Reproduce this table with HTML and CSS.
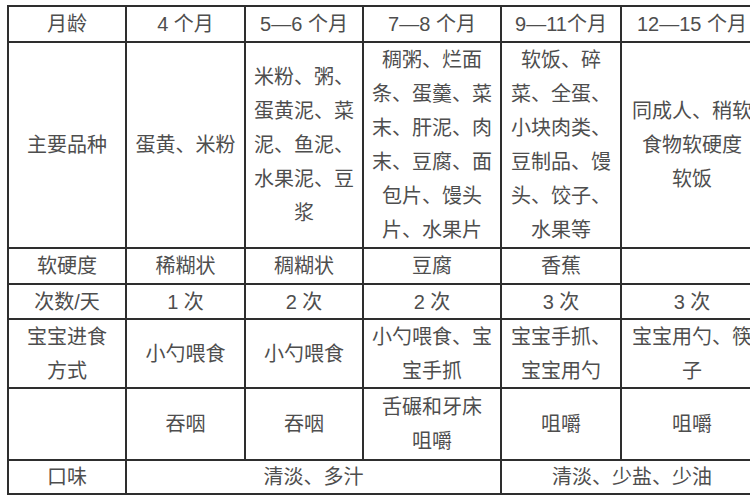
FILE: index.html
```html
<!DOCTYPE html>
<html lang="zh-CN">
<head>
<meta charset="utf-8">
<title>宝宝辅食月龄表</title>
<link rel="stylesheet" href="styles.css">
</head>
<body>
<div class="table">
  <div class="cell">月龄</div>
  <div class="cell">4 个月</div>
  <div class="cell">5—6 个月</div>
  <div class="cell">7—8 个月</div>
  <div class="cell">9—11个月</div>
  <div class="cell">12—15 个月</div>

  <div class="cell">主要品种</div>
  <div class="cell">蛋黄、米粉</div>
  <div class="cell">米粉、粥、<br>蛋黄泥、菜<br>泥、鱼泥、<br>水果泥、豆<br>浆</div>
  <div class="cell">稠粥、烂面<br>条、蛋羹、菜<br>末、肝泥、肉<br>末、豆腐、面<br>包片、馒头<br>片、水果片</div>
  <div class="cell">软饭、碎<br>菜、全蛋、<br>小块肉类、<br>豆制品、馒<br>头、饺子、<br>水果等</div>
  <div class="cell">同成人、稍软<br>食物软硬度<br>软饭</div>

  <div class="cell">软硬度</div>
  <div class="cell">稀糊状</div>
  <div class="cell">稠糊状</div>
  <div class="cell">豆腐</div>
  <div class="cell">香蕉</div>
  <div class="cell"></div>

  <div class="cell">次数/天</div>
  <div class="cell">1 次</div>
  <div class="cell">2 次</div>
  <div class="cell">2 次</div>
  <div class="cell">3 次</div>
  <div class="cell">3 次</div>

  <div class="cell">宝宝进食<br>方式</div>
  <div class="cell">小勺喂食</div>
  <div class="cell">小勺喂食</div>
  <div class="cell">小勺喂食、宝<br>宝手抓</div>
  <div class="cell">宝宝手抓、<br>宝宝用勺</div>
  <div class="cell">宝宝用勺、筷<br>子</div>

  <div class="cell"></div>
  <div class="cell">吞咽</div>
  <div class="cell">吞咽</div>
  <div class="cell">舌碾和牙床<br>咀嚼</div>
  <div class="cell">咀嚼</div>
  <div class="cell">咀嚼</div>

  <div class="cell">口味</div>
  <div class="cell span3">清淡、多汁</div>
  <div class="cell span2">清淡、少盐、少油</div>
</div>
</body>
</html>
```

FILE: styles.css
```css
html, body {
  margin: 0;
  padding: 0;
  overflow: hidden;
  background: #ffffff;
}

body {
  font-family: "Liberation Sans", "Noto Sans CJK SC", sans-serif;
  font-size: 20px;
  color: #4e4e4e;
}

.table {
  display: grid;
  grid-template-columns: 116px 117px 116px 136px 118px 140px;
  grid-template-rows: 34px 204px 34px 33px 67px 70px 32px;
  gap: 2px;
  padding: 2px;
  margin: 5px 0 0 7px;
  width: max-content;
  background: #2e2e2e;
}

.cell {
  background: #ffffff;
  display: flex;
  align-items: center;
  justify-content: center;
  text-align: center;
  line-height: 34px;
  white-space: nowrap;
}

.span3 {
  grid-column: span 3;
}

.span2 {
  grid-column: span 2;
}
```
